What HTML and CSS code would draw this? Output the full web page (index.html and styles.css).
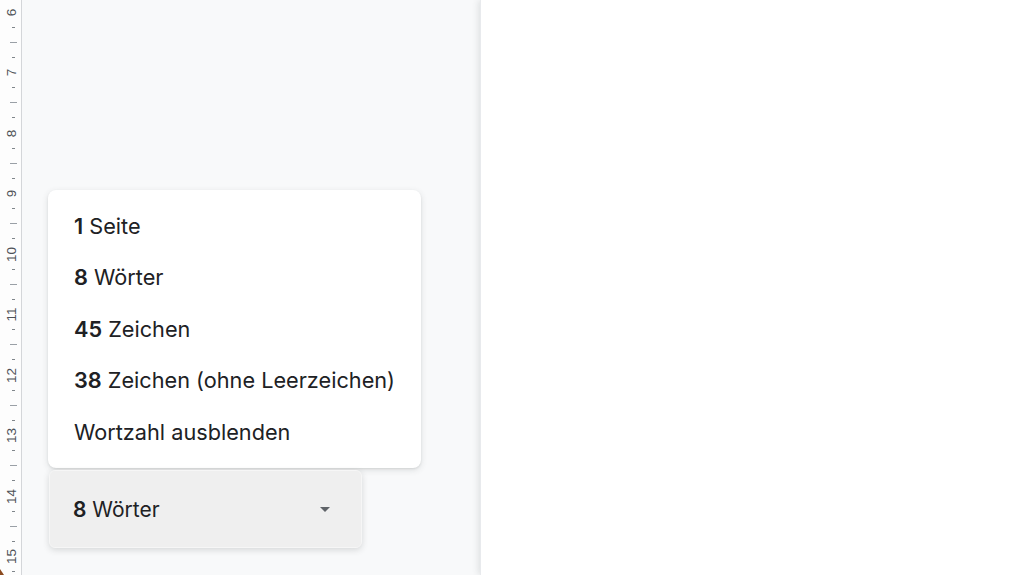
FILE: index.html
```html
<!DOCTYPE html>
<html lang="de">
<head>
    <meta charset="UTF-8">
    <meta name="viewport" content="width=device-width, initial-scale=1.0">
    <title>Wortzahl</title>
    <link rel="stylesheet" href="styles.css">
</head>
<body>
    <div class="ruler">
        <div class="seg"><span class="num">6</span><i class="tick"></i><i class="tick long"></i><i class="tick"></i></div>
        <div class="seg"><span class="num">7</span><i class="tick"></i><i class="tick long"></i><i class="tick"></i></div>
        <div class="seg"><span class="num">8</span><i class="tick"></i><i class="tick long"></i><i class="tick"></i></div>
        <div class="seg"><span class="num">9</span><i class="tick"></i><i class="tick long"></i><i class="tick"></i></div>
        <div class="seg"><span class="num">10</span><i class="tick"></i><i class="tick long"></i><i class="tick"></i></div>
        <div class="seg"><span class="num">11</span><i class="tick"></i><i class="tick long"></i><i class="tick"></i></div>
        <div class="seg"><span class="num">12</span><i class="tick"></i><i class="tick long"></i><i class="tick"></i></div>
        <div class="seg"><span class="num">13</span><i class="tick"></i><i class="tick long"></i><i class="tick"></i></div>
        <div class="seg"><span class="num">14</span><i class="tick"></i><i class="tick long"></i><i class="tick"></i></div>
        <div class="seg"><span class="num">15</span><i class="tick"></i><i class="tick long"></i><i class="tick"></i></div>
        <div class="marker"></div>
    </div>

    <div class="canvas">
        <div class="wordcount">
            <ul class="menu">
                <li><b>1</b> Seite</li>
                <li><b>8</b> Wörter</li>
                <li><b>45</b> Zeichen</li>
                <li><b>38</b> Zeichen (ohne Leerzeichen)</li>
                <li>Wortzahl ausblenden</li>
            </ul>
            <div class="counter">
                <span><b>8</b> Wörter</span>
                <svg class="caret" width="10" height="5" viewBox="0 0 10 5"><path d="M0 0h10L5 5z" fill="#5f6368"/></svg>
            </div>
        </div>
    </div>

    <div class="page"></div>
</body>
</html>
```

FILE: styles.css
```css
html, body {
    height: 100%;
}

body {
    margin: 0;
    display: flex;
    overflow: hidden;
    font-family: Inter, "Noto Sans", sans-serif;
    color: #202124;
    background-color: #f8f9fa;
}

/* vertical ruler */
.ruler {
    position: relative;
    width: 21px;
    flex-shrink: 0;
    padding-top: 4.5px;
    background-color: #fdfdfd;
    border-right: 1px solid #d4d6d9;
    overflow: hidden;
}

.seg {
    height: 60.5px;
    display: flex;
    flex-direction: column;
}

.seg > * {
    height: 15.125px;
}

.num {
    display: flex;
    align-items: center;
    justify-content: center;
    font-family: "Liberation Sans", Arial, sans-serif;
    font-size: 13.5px;
    color: #4d5156;
    transform: translateX(1.5px) rotate(-90deg);
}

.tick {
    display: block;
    position: relative;
}

.tick::after {
    content: "";
    position: absolute;
    left: 12px;
    top: 7px;
    width: 3px;
    height: 1px;
    background-color: #80868b;
}

.tick.long::after {
    left: 10px;
    width: 7px;
    background-color: #9aa0a6;
}

.marker {
    position: absolute;
    left: 0;
    bottom: 0;
    width: 0;
    height: 0;
    border-left: 4px solid #8b4a1f;
    border-top: 6px solid transparent;
}

/* grey area left of the page */
.canvas {
    width: 458px;
    flex-shrink: 0;
    display: flex;
    flex-direction: column;
    justify-content: flex-end;
    padding: 0 0 27px 26px;
    box-sizing: border-box;
}

.wordcount {
    display: flex;
    flex-direction: column;
    align-items: flex-start;
    gap: 2px;
}

.menu {
    list-style: none;
    margin: 0;
    padding: 11px 0 10px;
    width: 373px;
    box-sizing: border-box;
    background-color: #fff;
    border-radius: 8px;
    box-shadow: 0 2px 6px rgba(60, 64, 67, 0.15), 0 1px 2px rgba(60, 64, 67, 0.1);
}

.menu li {
    height: 51.5px;
    line-height: 51.5px;
    padding-left: 26px;
    font-size: 21.7px;
    white-space: nowrap;
}

b {
    font-weight: 600;
}

.counter {
    margin-left: 1px;
    width: 313px;
    height: 78px;
    box-sizing: border-box;
    display: flex;
    align-items: center;
    justify-content: space-between;
    padding: 0 31px 0 23px;
    font-size: 21px;
    background-color: #efefef;
    border: 1px solid #f6f6f6;
    border-radius: 6px;
    box-shadow: 0 2px 6px rgba(60, 64, 67, 0.18);
}

/* document page */
.page {
    flex: 1;
    background-color: #fff;
    box-shadow: -2px 0 6px rgba(60, 64, 67, 0.12);
    border-left: 1px solid #e8eaed;
}
```
